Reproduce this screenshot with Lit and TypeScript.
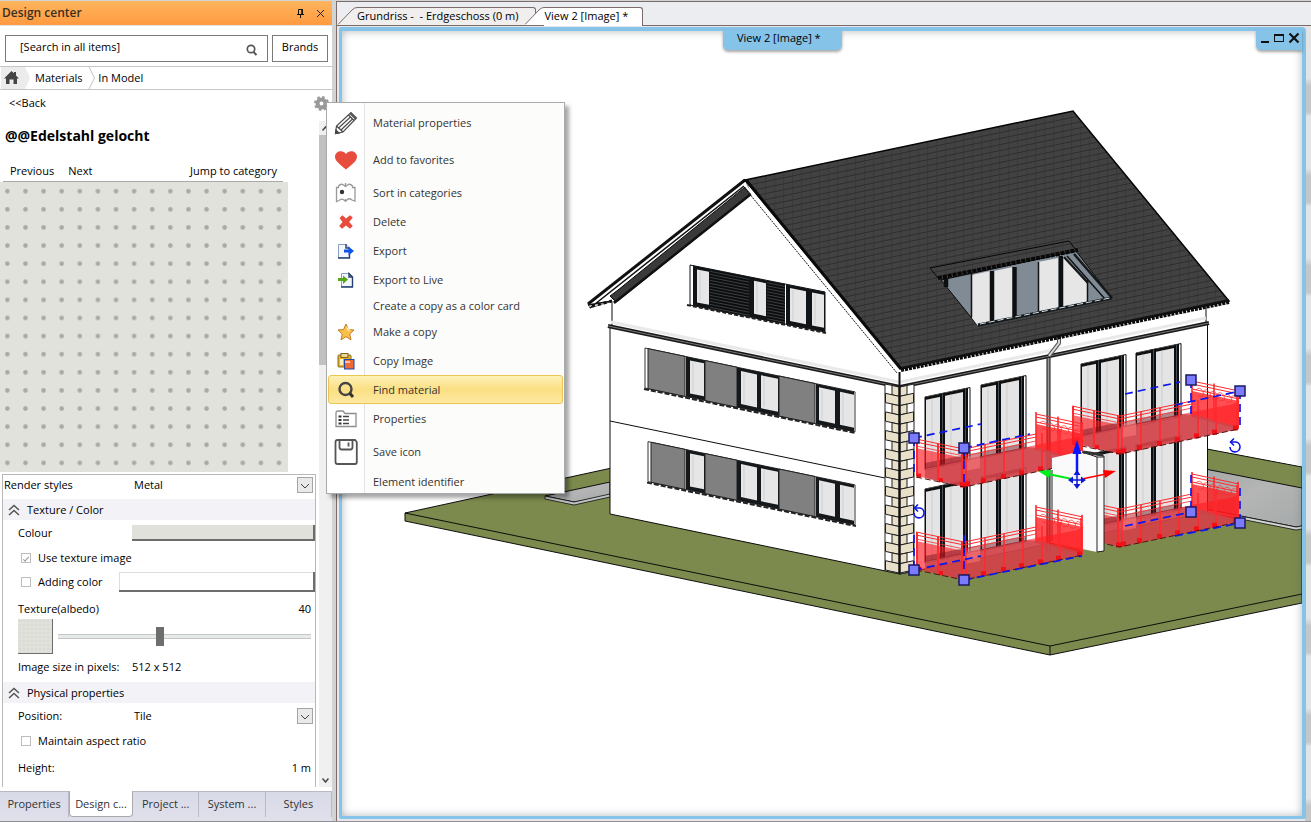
import { LitElement, html, svg, css } from "lit";
import { customElement } from "lit/decorators.js";

type Pt = [number, number];
const pts = (list: Pt[]) => list.map((p) => p.join(",")).join(" ");
const range = (n: number) => Array.from({ length: n }, (_, i) => i);

/* ---------- 3D model view ---------- */
@customElement("model-scene")
class ModelScene extends LitElement {
  static styles = css`
    :host { display: block; }
    .scene { display: block; width: 100%; height: 100%; }
  `;

  /* A slanted piece of facade between two x positions. */
  private band(x1: number, x2: number, top: (x: number) => number, bottom: (x: number) => number, fill: string, stroke = "none") {
    return svg`<polygon points=${pts([[x1, top(x1)], [x2, top(x2)], [x2, bottom(x2)], [x1, bottom(x1)]])} fill=${fill} stroke=${stroke}/>`;
  }

  private pane(x1: number, x2: number, top: (x: number) => number, bottom: (x: number) => number) {
    return svg`
      ${this.band(x1, x2, (x) => top(x) + 3, (x) => bottom(x) - 4, "#e6e6e6")}
      <line x1=${x1 + 3} y1=${top(x1) + 5} x2=${x1 + 3} y2=${bottom(x1) - 5} stroke="#cfcfcf"/>`;
  }

  private windowRow(x0: number, y0: number) {
    const top = (x: number) => y0 + (x - 645) * 0.209;
    const bot = (x: number) => top(x) + 40;
    return svg`
      ${this.band(x0, 855, top, bot, "#fff", "#333")}
      ${this.band(x0 + 3, 685, top, bot, "#808080", "#222")}
      ${this.band(686, 705, top, bot, "#15191c")}
      ${this.band(705, 737, top, bot, "#808080", "#222")}
      ${this.band(737, 779, top, bot, "#15191c")}
      ${this.band(779, 815, top, bot, "#808080", "#222")}
      ${this.band(816, 854, top, bot, "#15191c")}
      ${this.pane(690, 704, top, bot)}
      ${this.pane(741, 757, top, bot)}
      ${this.pane(761, 778, top, bot)}
      ${this.pane(819, 835, top, bot)}
      ${this.pane(840, 854, top, bot)}
      <line x1=${x0 - 1} y1=${bot(x0) + 1} x2="856" y2=${bot(856) + 1} stroke="#222" stroke-width="2" stroke-dasharray="5 2"/>`;
  }

  private door(x: number, y: number, h: number) {
    const top = (v: number) => y - (v - x) * 0.21;
    const bot = (v: number) => top(v) + h;
    return svg`
      ${this.band(x, x + 45, top, bot, "#fff", "#111")}
      ${this.band(x, x + 43, top, bot, "#e4e4e4")}
      ${this.band(x, x + 43, top, (v) => top(v) + 3, "#111")}
      ${this.band(x + 15, x + 20, top, bot, "#0c0f11")}
      ${this.band(x + 38, x + 43, top, bot, "#0c0f11")}
      <path d="M${x + 7} ${top(x + 7) + 3}v${h - 4}M${x + 26} ${top(x + 26) + 3}v${h - 4}" stroke="#cdcdcd" fill="none"/>
      <path d="M${x + 17.5} ${top(x + 17)}v${h}M${x + 40.5} ${top(x + 40)}v${h}" stroke="#4a4f52" fill="none"/>
      <line x1=${x + 0.5} y1=${y} x2=${x + 0.5} y2=${y + h} stroke="#111"/>`;
  }

  private balcony(dx: number, dy: number) {
    const front = (x: number) => 449 - (x - 964) * 0.205;
    const floor = (x: number) => 486 - (x - 964) * 0.205;
    const side = (x: number) => 439 + (x - 916) * 0.208;
    const back = (x: number) => 414 + (x - 1036) * 0.21;
    return svg`
      <g transform="translate(${dx} ${dy})">
        <polygon points="916,448 964,458 964,486 916,476" fill="#ff1c22" opacity=".65"/>
        <polygon points="964,460 1036,445 1083,436 1083,462 964,486" fill="#ff2a30" opacity=".6"/>
        <polygon points="1036,424 1083,434 1083,462 1036,450" fill="#ff1418" opacity=".75"/>
        <polygon points="925,468 962,460 1026,447 1040,448 1083,460 1083,462 964,487 925,478" fill="#cc464c" opacity=".82"/>
        <polygon points="925,463 1026,443 1026,448 925,469" fill="#70101a" opacity=".45"/>
        <polygon points="965,457 980,454 980,468 965,471" fill="#ff8080" opacity=".5"/>
        <g stroke="#ff2a2e" fill="none">
          <path d="M916 439L964 449L1036 434M916 442L964 452L1036 437" stroke-width="1"/>
          <path d="M916 446L964 456L1036 441" stroke-width="1" opacity=".8"/>
          <path d="M1036 414L1083 424M1036 417L1083 427M1036 422L1083 432" stroke-width="1"/>
          ${range(6).map((i) => svg`<path d="M${1040 + i * 7} ${back(1040 + i * 7) + 8}q4 -4 7 2t-5 4" opacity=".7"/>`)}
          ${[917, 938, 962].map((x) => svg`<line x1=${x} y1=${side(x)} x2=${x} y2=${side(x) + 37} stroke-width="2"/>`)}
          ${[966, 985, 1004, 1023, 1042, 1060, 1081].map((x) => svg`<line x1=${x} y1=${front(x)} x2=${x} y2=${floor(x)} stroke-width="1.6"/>`)}
          ${[1036, 1058, 1082].map((x) => svg`<line x1=${x} y1=${back(x) - 2} x2=${x} y2=${back(x) + 36} stroke-width="1.6"/>`)}
        </g>
        ${[919, 941].map((x) => svg`<rect x=${x - 2} y=${side(x) + 34} width="4" height="4" fill="#f01016"/>`)}
        ${[962, 967, 983, 1003, 1021, 1040, 1058, 1079].map((x) => svg`<rect x=${x - 2} y=${floor(x) - 4} width="5" height="5" fill="#f01016"/>`)}
        <path d="M916 477L964 487L1083 462" stroke="#511" fill="none" stroke-dasharray="6 3"/>
      </g>`;
  }

  private stones() {
    return range(20).map((i) => {
      const y = 384 + i * 9.3;
      const wide = i % 2 === 1;
      return svg`
        <g fill=${"#e9e0ca"} stroke="#1c1c1c">
          <polygon points=${pts([[wide ? 885.5 : 892, y + (wide ? 0 : 1.5)], [899, y + 3], [899, y + 12.3], [wide ? 885.5 : 892, y + (wide ? 9.3 : 10.8)]])}/>
          <polygon points=${pts([[900, y + 3], [wide ? 913.5 : 907, y + (wide ? 0 : 1.5)], [wide ? 913.5 : 907, y + (wide ? 9.3 : 10.8)], [900, y + 12.3]])}/>
        </g>`;
    });
  }

  private rotateMark(x: number, y: number) {
    return svg`<g transform="translate(${x} ${y})" fill="none" stroke="#0b16e8" stroke-width="1.600">
      <path d="M-5 1A5 5 0 1 0 1 -4H-4"/><path d="M-1 -7.500L-4.500 -4L-1 -0.500"/></g>`;
  }

  render() {
    const gt = (x: number) => 265 + (x - 690) * 0.2;
    const gb = (x: number) => gt(x) + 40;
    const handles: Pt[] = [[914, 438], [964, 448], [1191, 380], [1240, 391], [914, 570], [964, 580], [1191, 512], [1240, 523]];
    return html`
      <svg class="scene" viewBox="342 31 960 784" preserveAspectRatio="xMidYMin meet" role="img" aria-label="3D house view">
        <defs>
          <pattern id="tiles" width="9" height="6" patternUnits="userSpaceOnUse" patternTransform="skewY(-11.8)">
            <rect width="9" height="6" fill="#424242"/>
            <rect width="9" height="1" y="5" fill="#2e2e2e"/>
            <rect width="1" height="5" fill="#3b3b3b"/>
          </pattern>
          <pattern id="louvre" width="10" height="3" patternUnits="userSpaceOnUse" patternTransform="skewY(11.3)">
            <rect width="10" height="3" fill="#0b0d0e"/>
            <rect width="10" height="1" fill="#3c3f41"/>
          </pattern>
          <pattern id="grass" width="7" height="7" patternUnits="userSpaceOnUse">
            <rect width="7" height="7" fill="#7c8a4d"/>
            <path d="M1 2h1M5 1h1M3 5h1" stroke="#78874b"/>
            <path d="M4 3h1M0 6h1" stroke="#808d51"/>
          </pattern>
          <linearGradient id="stone" x1="0" y1="0" x2="1" y2="1">
            <stop offset="0" stop-color="#a2a6a6"/><stop offset=".5" stop-color="#b4b5b4"/><stop offset="1" stop-color="#a6aaaa"/>
          </linearGradient>
        </defs>

        <!-- ground -->
        <g stroke="#0d0d0d" stroke-linejoin="round">
          <polygon points="405,513 630,464 1207,449 1302,467 1302,603 1050,655 405,521" fill="url(#grass)"/>
          <path d="M405 513L1050 646L1302 594M1050 646V655" fill="none"/>
          <polygon points="1190,466 1302,488 1302,526 1296,527 1190,506" fill="url(#stone)"/>
          <polygon points="1190,506 1296,527 1302,526 1302,529 1296,530 1190,509" fill="#d2d4d4" stroke-width=".8"/>
          <polygon points="545,496 610,482 610,496 574,502" fill="url(#stone)"/>
          <polygon points="545,496 574,502 610,494 610,497 574,505 545,499" fill="#bfc3c4" stroke-width=".8"/>
        </g>
        <polygon points="600,460 900,400 1207,449 900,440" fill="#fff"/>
        <polygon points="1207.500,330 1302,330 1302,466 1207.500,448" fill="#fff"/>

        <!-- walls -->
        <polygon points="610,327 612,303 746,184 900,371 1207,305 1207,512 900,574 610,514" fill="#fff"/>
        <path d="M612 303V326M610 327V514L900 574L1207 512M610 421L885 478M1207.500 324V512M1206 300V323" fill="none" stroke="#0d0d0d"/>
        <path d="M611 322L899 382M900 382L1206 318" stroke="#e9e9e9" fill="none" stroke-width="3"/>
        <path d="M608 326L900 387L1209 323" fill="none" stroke="#1a1a1a" stroke-width="4"/>
        <path d="M608 326L900 387L1209 323" fill="none" stroke="#777" stroke-width="1"/>

        <!-- left eave -->
        <polygon points="745,179 588,304 590,308 606,303 618,301 751,194" fill="#fff" stroke="#111" stroke-width=".6"/>
        <polygon points="745,187 751,194 616,302 610,296 618,290" fill="#3a3a3a" stroke="#0a0a0a"/>
        <path d="M745 180L588 304" stroke="#111" stroke-width="3"/>
        <path d="M744 186L590 308M588 305L612 301" stroke="#111" fill="none" stroke-width="1.500"/>
        <path d="M592 306L612 301" stroke="#111" stroke-width="3" stroke-dasharray="3 3"/>
        <path d="M751 194L614 303" stroke="#111" stroke-width="2.500"/>
        <!-- gable windows -->
        ${this.band(690, 825, gt, gb, "#fff", "#111")}
        ${this.band(693, 711, gt, gb, "#111518")}
        ${this.band(710, 749, gt, gb, "url(#louvre)")}
        ${this.band(749, 767, gt, gb, "#111518")}
        ${this.band(767, 785, gt, gb, "url(#louvre)")}
        ${this.band(786, 825, gt, gb, "#111518")}
        ${this.pane(697, 709, gt, gb)}
        ${this.pane(754, 766, gt, gb)}
        ${this.pane(790, 806, gt, gb)}
        ${this.pane(812, 824, gt, gb)}
        <path d="M687 305L826 333" stroke="#222" stroke-width="2" stroke-dasharray="4 2"/>

        ${this.windowRow(645, 348)}
        ${this.windowRow(648, 441)}

        <!-- corner stones -->
        <polygon points="885,384 900,387 914,384 914,571 900,574 885,571" fill="#fff" stroke="#222"/>
        ${this.stones()}
        <path d="M899.500 372V574" stroke="#111" stroke-width="2"/>

        <!-- garden facade -->
        ${this.door(925, 397, 73)}
        ${this.door(981, 385, 73)}
        ${this.door(1081, 364, 73)}
        ${this.door(1136, 353, 73)}
        ${this.door(925, 489, 74)}
        ${this.door(981, 477, 74)}
        ${this.door(1081, 456, 74)}
        ${this.door(1136, 445, 74)}
        <path d="M1048.500 358V552" stroke="#111" stroke-width="4"/>
        <path d="M1048.500 358V552" stroke="#999" stroke-width="2"/>
        <path d="M1059 336V343L1049 356" stroke="#555" stroke-width="4" fill="none"/>
        <path d="M1059 336V343L1049 356" stroke="#d8d8d8" stroke-width="2" fill="none"/>

        <!-- roof -->
        <polygon points="745,180 1073,111 1229,301 901,369" fill="url(#tiles)" stroke="#050505" stroke-width="1.500"/>
        <path d="M744 184L898 371" stroke="#fff" stroke-width="2"/>
        <path d="M743 186L897 373" stroke="#111" stroke-width="1" stroke-dasharray="2 1"/>
        <path d="M746 180L901 369" stroke="#0a0a0a" stroke-width="3"/>
        <path d="M901 370L1229 302" stroke="#0a0a0a" stroke-width="4" stroke-dasharray="3 1"/>
        <path d="M901 368L1229 300" stroke="#111" stroke-width="2"/>

        <!-- roof terrace -->
        <path d="M938 278L930 268L1069 241L1076 250" fill="none" stroke="#080808"/>
        <polygon points="941,280 1076,251 1112,298 978,326" fill="#808b95" stroke="#0a0a0a"/>
        <polygon points="972,275 990,271 990,323 978,326 972,318" fill="#e6e6e6"/>
        <polygon points="994,271 1013,267 1013,318 994,322" fill="#e6e6e6"/>
        <polygon points="1038,262 1058,258 1058,308 1038,313" fill="#e6e6e6"/>
        <polygon points="1063,256 1066,257 1087,281 1087,302 1063,307" fill="#e6e6e6"/>
        <path d="M946 278V287M992 271V322M1014.500 267V318M1061 256V308" stroke="#0d1012" stroke-width="4.500" fill="none"/>
        <path d="M971.500 274V317M1038.500 262V312M1087.500 280V302M1067 256L1105 299" stroke="#111" fill="none" stroke-width="1.500"/>
        <path d="M1064 257L1088 283M1074 254L1112 298" stroke="#16191b" fill="none" stroke-width="2.500"/>
        <path d="M978 325L1112 298" stroke="#15191c" stroke-width="3"/>
        <path d="M980 324L1110 298" stroke="#cfe0e8" stroke-width="1" stroke-dasharray="6 3"/>
        <path d="M938 278L1078 250" stroke="#090909" stroke-width="4" stroke-dasharray="4 1"/>

        <!-- balconies -->
        ${this.balcony(156, -33)}
        ${this.balcony(156, 60)}
        ${this.balcony(0, 0)}
        <polygon points="1052,458 1082,451 1104,456 1104,551 1097,552 1052,543" fill="#fafafa"/>
        <path d="M1082 452L1104 456V551L1097 552V457L1082 452M1097 457H1104M1052 470V541" fill="none" stroke="#222"/>
        <path d="M1083 452L1103 455" stroke="#333" stroke-width="3"/>
        ${this.balcony(0, 93)}

        <!-- selection frame -->
        <g stroke="#0b16f0" stroke-width="1.700" stroke-dasharray="8 5" fill="none">
          <path d="M914 438L981 424M964 448L1030 434M914 438V475M914 535V570M964 448V487M964 535V580"/>
          <path d="M1125 394L1180 382M1175 405L1240 391M1191 380V415M1240 391V430"/>
          <path d="M914 570L981 556M964 580L1082 556M1125 526L1191 512M1175 536L1240 523M1191 475V512M1240 488V523"/>
        </g>
        ${handles.map(([x, y]) => svg`<rect x=${x - 5} y=${y - 5} width="10" height="10" fill="#7b7bff" stroke="#1a1a60" stroke-width="1.500"/>`)}
        ${this.rotateMark(919, 512)}
        ${this.rotateMark(1235, 446)}

        <!-- move gizmo -->
        <path d="M1077 480L1048 474" stroke="#00e81c" stroke-width="2"/>
        <path d="M1038 471L1051 470L1049 478Z" fill="#00f01c"/>
        <path d="M1077 480L1106 474" stroke="#f00" stroke-width="1.500"/>
        <path d="M1116 471L1103 470L1105 478Z" fill="#f00"/>
        <path d="M1077 480V452" stroke="#0b16ff" stroke-width="2.500"/>
        <path d="M1077 440L1081.500 454H1072.500Z" fill="#0b16ff"/>
        <path d="M1070 480H1084M1077 473V487" stroke="#fff" stroke-width="3"/>
        <path d="M1077 470V487M1070 480H1084" stroke="#0b16d8" stroke-width="1.500"/>
        <path d="M1077 489L1073.500 484H1080.500ZM1068 480L1073 476.500V483.500ZM1086 480L1081 476.500V483.500ZM1077 470L1073.500 475H1080.500Z" fill="#0b16d8"/>
      </svg>`;
  }
}

/* ---------- Icons ---------- */
const icons: Record<string, unknown> = {
  pencil: html`<svg width="24" height="26" viewBox="0 0 24 26" fill="none" stroke="#4a4a4a" stroke-width="1.200"><path d="M1.500 23.500L2.500 16L17 2.500L22.500 8L9 22ZM2.500 16L9 22M14.500 5L20 10.500M16 3.500L21.500 9M4.500 18L16.500 7M7 20L18.500 9"/><path d="M1.500 23.500L2 20L5 23Z" fill="#444"/></svg>`,
  heart: html`<svg width="24" height="20" viewBox="0 0 24 20"><path d="M12 19.500C4 13 1 10.500 1 6.500C1 1 9 -1 12 4C15 -1 23 1 23 6.500C23 10.500 20 13 12 19.500Z" fill="#e74c3c"/></svg>`,
  map: html`<svg width="22" height="22" viewBox="0 0 22 22" fill="none" stroke="#999" stroke-width="1.300"><path d="M1.500 5.500H3.500V4Q6 1 8.500 3L10.500 4.500L12.500 3Q15 1 17.500 4V5.500H20V19L17 18Q14 15.500 12 18L10.500 19L9 18Q6.500 16 4 18.500L1.500 19.500Z"/><path d="M10.500 1V5M10.500 17V20"/><circle cx="7" cy="10" r="2.200" fill="#333" stroke="none"/></svg>`,
  cross: html`<svg width="16" height="16" viewBox="0 0 16 16"><path d="M1.500 4L4.500 1.200L8 4.500L12 1.200L14.800 3.500L11.200 8L14.800 12L12 14.800L8 11.500L4 14.800L1.200 12L4.500 8Z" fill="#e74c3c"/></svg>`,
  exportDoc: html`<svg width="18" height="16" viewBox="0 0 18 16"><path d="M1.500 1.500H9L12.500 5V14.500H1.500Z" fill="#f4f7fc" stroke="#8ba0bf"/><path d="M1 15H12.500V11M9 1V5H12.500" stroke="#24406f" fill="none" stroke-width="1.400"/><path d="M7 6.500H11.500V3.500L17 8L11.500 12.500V9.500H7Z" fill="#0f52e8"/></svg>`,
  importDoc: html`<svg width="18" height="16" viewBox="0 0 18 16"><path d="M4.500 1.500H12L15.500 5V14.500H4.500Z" fill="#f4f7fc" stroke="#8ba0bf"/><path d="M4 15H15.500V5L12 1.500V5H15" stroke="#24406f" fill="none" stroke-width="1.400"/><path d="M1 6H6V3.500L11 7.500L6 12V9H1Z" fill="#57a81c"/></svg>`,
  star: html`<svg width="18" height="18" viewBox="0 0 18 18"><path d="M9 1L11.400 6.500L17 7L12.700 11L14 16.800L9 13.700L4 16.800L5.300 11L1 7L6.600 6.500Z" fill="#fbc04a" stroke="#bf7d22"/><path d="M9 3L10.500 7.500L14 8Z" fill="#fff1b0"/></svg>`,
  paste: html`<svg width="18" height="18" viewBox="0 0 18 18"><rect x="1" y="3" width="13" height="12" rx="1" fill="#e9b12d" stroke="#8a6a14"/><rect x="4" y="1.500" width="7" height="4" fill="#e8d890" stroke="#7c6522"/><path d="M3 7h3v6H3z" fill="#fff0b8"/><rect x="7.500" y="7.500" width="9.500" height="9.500" fill="#ee6b35" stroke="#1949b0"/><path d="M8 9h5v2H8z" fill="#ffc29b"/></svg>`,
  find: html`<svg width="18" height="18" viewBox="0 0 18 18" fill="none"><circle cx="8.500" cy="8" r="6" stroke="#444" stroke-width="2.400"/><path d="M12.500 12L16 16" stroke="#333" stroke-width="3"/></svg>`,
  props: html`<svg width="22" height="18" viewBox="0 0 22 18" fill="none"><path d="M1 16.500V3Q1 1 3 1H8L10 3.500H21V16.500Z" stroke="#8e8e8e" stroke-width="1.300"/><path d="M8 6.500H14M8 10H14M8 13.500H14" stroke="#444" stroke-width="1.400"/><path d="M3.500 5.500h3v2h-3zM3.500 9h3v2h-3zM3.500 12.500h3v2h-3z" fill="#333"/></svg>`,
  disk: html`<svg width="24" height="26" viewBox="0 0 24 26" fill="none" stroke="#555" stroke-width="1.800"><path d="M1.500 3Q1.500 1 3.500 1H21L22.800 3V23Q22.800 25 21 25H3.500Q1.500 25 1.500 23Z"/><path d="M5.500 1V8Q5.500 10.500 7.500 10.500H16.500Q18.500 10.500 18.500 8V1"/><path d="M14.500 3.500V7.500"/></svg>`,
};

const menuItems: { label: string; icon?: string; size?: string }[] = [
  { label: "Material properties", icon: "pencil", size: "tall" },
  { label: "Add to favorites", icon: "heart", size: "tall" },
  { label: "Sort in categories", icon: "map" },
  { label: "Delete", icon: "cross" },
  { label: "Export", icon: "exportDoc" },
  { label: "Export to Live", icon: "importDoc" },
  { label: "Create a copy as a color card", size: "short" },
  { label: "Make a copy", icon: "star" },
  { label: "Copy Image", icon: "paste" },
  { label: "Find material", icon: "find", size: "active" },
  { label: "Properties", icon: "props" },
  { label: "Save icon", icon: "disk", size: "tall" },
  { label: "Element identifier", size: "short" },
];

@customElement("context-menu")
class ContextMenu extends LitElement {
  static styles = css`
    :host { display: block; }
    .menu {
      list-style: none; margin: 0; padding: 1px 1px 0; width: 239px; box-sizing: border-box;
      border: 1px solid #a7abb0; box-shadow: 4px 4px 4px rgba(0, 0, 0, .35);
      background: linear-gradient(90deg, #fff 37px, #e2e3e4 37px, #e2e3e4 38px, #fcfcfa 38px);
    }
    .item {
      display: grid; grid-template-columns: 34px 1fr; align-items: center; column-gap: 10px;
      width: 100%; height: 29px; padding: 0; border: 1px solid transparent; background: none; box-sizing: border-box;
      font: 11px/16px "Open Sans", "Noto Sans", sans-serif; color: #333; text-align: left;
    }
    .tall { height: 37px; }
    .short { height: 23px; }
    .active { border-color: #eac54f; border-radius: 3px; background: linear-gradient(#fdf0b8, #fbdf82 50%, #fde9a2); }
    .icon { display: flex; justify-content: center; }
  `;
  render() {
    return html`<ul class="menu" role="menu">
      ${menuItems.map((m) => html`<li role="none"><button class="item ${m.size ?? ""}" role="menuitem">
        <span class="icon">${m.icon ? icons[m.icon] : ""}</span><span>${m.label}</span></button></li>`)}
    </ul>`;
  }
}

/* ---------- Design center panel ---------- */
const chevrons = html`<svg width="12" height="12" viewBox="0 0 12 12" fill="none" stroke="#555" stroke-width="1.500"><path d="M1 6L6 1.500L11 6M1 11L6 6.500L11 11"/></svg>`;

@customElement("design-center")
class DesignCenter extends LitElement {
  static styles = css`
    :host { display: flex; flex-direction: column; background: #fff; color: #000; font: 11px/16px "Open Sans", "Noto Sans", sans-serif; min-height: 0; }
    button, input, select { font: inherit; color: inherit; margin: 0; }
    button { background: none; border: 0; padding: 0; }
    a { color: inherit; text-decoration: none; }
    .head { display: flex; align-items: center; height: 24px; padding: 0 2px; background: linear-gradient(#ffb55e, #ff9a3f); border-bottom: 1px solid #e4e4e4; }
    .head h1 { flex: 1; margin: 0; font-size: 12px; font-weight: 600; color: #3a3020; }
    .head button { display: flex; width: 20px; justify-content: center; }
    .search { display: flex; gap: 4px; padding: 9px 4px 4px 5px; }
    .field { flex: 1; display: flex; align-items: center; border: 1px solid #7a7a7a; height: 25px; min-width: 0; }
    .field input { flex: 1; min-width: 0; border: 0; outline: 0; padding: 0 0 4px 14px; background: none; }
    .field button { display: flex; padding: 2px 9px 0 0; }
    .brands { border: 1px solid #7a7a7a; width: 56px; padding-bottom: 4px; }
    .crumbs { display: flex; align-items: center; height: 22px; border: solid #c6c6c6; border-width: 1px 0; }
    .home { display: flex; align-items: center; width: 31px; height: 22px; }
    .crumbs a { margin-right: 5px; }
    .crumbs .home { margin: 0 4px 0 0; }
    .back { display: flex; justify-content: space-between; align-items: center; height: 31px; padding: 0 3px 0 9px; }
    .back a { padding-bottom: 6px; }
    .scroll { flex: 1; display: flex; min-height: 0; overflow: hidden; }
    .content { flex: 1; min-width: 0; }
    .bar { width: 13px; background: #f0f0f0; display: flex; flex-direction: column; justify-content: space-between; }
    .bar .top { height: 244px; background: #c1c1c1; }
    .arrow { display: flex; align-items: center; justify-content: center; width: 13px; height: 14px; background: #f0f0f0; }
    h2 { margin: 0; padding: 6px 5px 0; font-size: 14px; line-height: 18px; font-weight: 700; }
    .nav { display: flex; gap: 14px; margin: 17px 36px 0 3px; padding: 1px 6px 2px 7px; border-bottom: 1px solid #aaa; }
    .nav .jump { margin-left: auto; }
    .preview { display: block; }
    .props { margin: 2px 3px 0 2px; border: solid #b8b8b8; border-width: 1px 1px 0; height: 400px; }
    .row { display: flex; align-items: center; height: 26px; padding-left: 15px; }
    .flush { padding-left: 1px; height: 20px; margin-bottom: 4px; }
    .label { width: 114px; flex: none; }
    .flush .label { width: 128px; }
    select { appearance: none; flex: 1; min-width: 0; height: 20px; padding: 0 0 0 2px; border: 0; outline: 0; background: none; }
    .drop { display: flex; flex: 1; min-width: 0; align-items: center; }
    .drop svg { margin-left: -16px; margin-right: 2px; pointer-events: none; flex: none; }
    .section { display: flex; align-items: center; gap: 7px; margin: 2px 0 0; padding-left: 5px; height: 21px; background: #f2f2f7; font-size: 11px; font-weight: 400; }
    .swatch { flex: 1; height: 16px; border: solid #6d6d6d; border-width: 0 2px 2px 0; background: #e0e1da; }
    .white { background: #fff; height: 20px; box-shadow: inset 1px 1px #ddd; margin-left: 9px; }
    .check { height: 24px; gap: 7px; padding-left: 18px; }
    .check input { appearance: none; width: 10px; height: 10px; border: 1px solid #bdbdbd; background: #fff; display: grid; place-items: center; }
    .check input:checked::after { content: ""; width: 5px; height: 2px; border: solid #999; border-width: 0 0 1px 1px; transform: rotate(-50deg); }
    .low { height: 24px; padding-top: 6px; box-sizing: border-box; }
    .grow { flex: 1; }
    .value { padding-right: 4px; }
    .slide { height: 36px; gap: 5px; padding-right: 4px; }
    .thumb { width: 35px; height: 35px; box-sizing: border-box; border: solid #6d6d6d; border-width: 0 1px 1px 0; background: radial-gradient(#d9dad4 1px, #e0e1da 1px) 0 0 / 4px 4px; }
    input[type="range"] { appearance: none; flex: 1; min-width: 0; height: 20px; background: none; }
    input[type="range"]::-webkit-slider-runnable-track { height: 5px; box-sizing: border-box; background: #e7eaea; border: solid #c6c6c6; border-width: 1px 0; }
    input[type="range"]::-webkit-slider-thumb { appearance: none; width: 8px; height: 19px; margin-top: -8px; background: #6d6d6d; }
    .tabs { display: flex; height: 34px; padding-top: 4px; background: linear-gradient(#fff 4px, #b9b9c6 4px, #b9b9c6 5px, #d9dae8 5px, #dfe0ea); box-sizing: border-box; }
    .tab { height: 26px; flex: 1; min-width: 0; color: #333; border-right: 1px solid #b9bac6; white-space: nowrap; overflow: hidden; }
    .first { flex: 0 0 69px; }
    .on { background: #fff; border: 1px solid #aaa; border-top: 0; border-radius: 0 0 4px 4px; flex: 0 0 64px; box-sizing: border-box; }
  `;

  private dropMark = html`<svg width="16" height="16" viewBox="0 0 16 16" fill="none"><rect x=".5" y=".5" width="15" height="15" fill="#e9e9e9" stroke="#a5a5a5"/><path d="M4 7L8 11L12 7" stroke="#444"/></svg>`;

  render() {
    return html`
      <header class="head">
        <h1>Design center</h1>
        <button aria-label="Pin"><svg width="9" height="10" viewBox="0 0 9 10" fill="none" stroke="#111"><path d="M2.500 6V1.500H6.500V6M1 6.500H8M4.500 6.500V10"/><path d="M6 1V6" stroke-width="1.500"/></svg></button>
        <button aria-label="Close"><svg width="9" height="9" viewBox="0 0 9 9" stroke="#222"><path d="M1 1L8 8M8 1L1 8"/></svg></button>
      </header>
      <div class="search">
        <div class="field">
          <input type="text" aria-label="Search" .value=${"[Search in all items]"} />
          <button aria-label="Start search"><svg width="12" height="12" viewBox="0 0 12 12" fill="none" stroke="#555"><circle cx="5" cy="5" r="3.700" stroke-width="1.700"/><path d="M7.500 8L10.500 11" stroke-width="2"/></svg></button>
        </div>
        <button class="brands">Brands</button>
      </div>
      <nav class="crumbs" aria-label="Breadcrumb">
        <a class="home" href="#" aria-label="Home"><svg width="31" height="22" viewBox="0 0 31 22"><path d="M1 0H25L30 11L25 22H1Z" fill="#ececec"/><path d="M4 11.500L11.500 4L14 6.300V5H16V8.500L19 11.500H17V17H13.500V12.500H9.500V17H6V11.500Z" fill="#444"/></svg></a>
        <a href="#">Materials</a>
        <svg width="8" height="22" viewBox="0 0 8 22" fill="none" stroke="#c2c2c2"><path d="M1 0L6.500 11L1 22"/></svg>
        <a href="#">&nbsp;In Model</a>
      </nav>
      <div class="back">
        <a href="#">&lt;&lt;Back</a>
        <button aria-label="Options"><svg width="15" height="15" viewBox="0 0 15 15"><circle cx="7.500" cy="7.500" r="4" fill="none" stroke="#999" stroke-width="4"/><circle cx="7.500" cy="7.500" r="6.500" fill="none" stroke="#999" stroke-width="2" stroke-dasharray="2.500 2.600"/></svg></button>
      </div>
      <div class="scroll">
        <div class="content">
          <h2>@@Edelstahl gelocht</h2>
          <nav class="nav"><a href="#">Previous</a><a href="#">Next</a><a class="jump" href="#">Jump to category</a></nav>
          <svg class="preview" width="288" height="290" viewBox="0 0 288 290" role="img" aria-label="Material preview">
            <defs><pattern id="holes" x="-1.700" y=".2" width="18.110" height="18.110" patternUnits="userSpaceOnUse"><circle cx="9.050" cy="9.050" r="2.300" fill="#a9aaa5"/></pattern></defs>
            <rect width="288" height="290" fill="#e1e2dc"/><rect width="288" height="290" fill="url(#holes)"/>
          </svg>
          <div class="props">
            <div class="row flush"><label class="label" for="style">Render styles</label><span class="drop"><select id="style"><option>Metal</option></select>${this.dropMark}</span></div>
            <h3 class="section">${chevrons}Texture / Color</h3>
            <div class="row"><label class="label" for="colour">Colour</label><button class="swatch" id="colour"></button></div>
            <div class="row check"><input type="checkbox" id="tex" checked /><label for="tex">Use texture image</label></div>
            <div class="row check"><input type="checkbox" id="add" /><label for="add">Adding color</label><button class="swatch white" aria-label="Added color"></button></div>
            <div class="row low"><label class="grow" for="albedo">Texture(albedo)</label><span class="value">40</span></div>
            <div class="row slide"><span class="thumb"></span><input id="albedo" type="range" min="0" max="100" value="40" /></div>
            <div class="row"><span class="label">Image size in pixels:</span><span>512 x 512</span></div>
            <h3 class="section">${chevrons}Physical properties</h3>
            <div class="row"><label class="label" for="pos">Position:</label><span class="drop"><select id="pos"><option>Tile</option></select>${this.dropMark}</span></div>
            <div class="row check"><input type="checkbox" id="ratio" /><label for="ratio">Maintain aspect ratio</label></div>
            <div class="row low"><span class="grow">Height:</span><span class="value">1 m</span></div>
          </div>
        </div>
        <div class="bar">
          <div class="top"><span class="arrow"><svg width="7" height="5" viewBox="0 0 7 5"><path d="M.5 4.500L3.500 1L6.500 4.500" stroke="#444" fill="none" stroke-width="1.500"/></svg></span></div>
          <span class="arrow"><svg width="7" height="5" viewBox="0 0 7 5"><path d="M.5 .5L3.500 4L6.500 .5" stroke="#444" fill="none" stroke-width="1.500"/></svg></span>
        </div>
      </div>
      <div class="tabs" role="tablist">
        <button class="tab first" role="tab">Properties</button>
        <button class="tab on" role="tab" aria-selected="true">Design c...</button>
        <button class="tab" role="tab">Project ...</button>
        <button class="tab" role="tab">System ...</button>
        <button class="tab" role="tab">Styles</button>
      </div>`;
  }
}

/* ---------- Application frame ---------- */
@customElement("app-root")
class AppRoot extends LitElement {
  static styles = css`
    :host { display: block; }
    .app {
      position: relative; display: grid; grid-template-columns: 332px 1fr; column-gap: 4px; height: 100vh; box-sizing: border-box;
      padding: 1px 0 0; background: #d2d4d4; overflow: hidden; font: 11px/16px "Open Sans", "Noto Sans", sans-serif; border-bottom: 1px solid #8f8f95;
    }
    .main { display: flex; flex-direction: column; min-width: 0; min-height: 0; border: solid #7b6b6b; border-width: 1px 0 0 1px; background: #ebedf1; }
    .strip { display: flex; align-items: flex-end; height: 24px; padding-left: 1px; border-bottom: 1px solid #7b6b6b; box-sizing: border-box; }
    .tab { display: flex; height: 18px; padding: 0; border: 0; background: none; font: inherit; color: #000; }
    .tab .body { height: 18px; box-sizing: border-box; border: solid #7b6b6b; border-width: 1px 1px 0 0; border-radius: 0 3px 0 0; background: #f1eeee; padding-right: 16px; white-space: pre; }
    .tab svg { display: block; fill: #f1eeee; stroke: #7b6b6b; }
    .second { margin-left: -11px; margin-bottom: -1px; height: 19px; }
    .second .body { background: #fff; height: 19px; padding: 0 14px 0 1px; }
    .second svg { fill: #fff; }
    .desk { flex: 1; display: flex; min-height: 0; padding: 1px 5px 2px 2px; background: linear-gradient(90deg, #e5e7ea calc(100% - 6px), transparent 0), repeating-linear-gradient(#e4e4e4 0 52px, #c6c6c6 60px 86px, #e0e0e0 90px); }
    .view { position: relative; flex: 1; min-width: 0; border: solid #86c3e9; border-width: 4px 4px 3px 3px; border-radius: 2px 4px 2px 2px; background: #fff; }
    .view model-scene { height: 100%; }
    .shade { position: absolute; inset: 0; box-shadow: inset 0 0 8px rgba(80, 90, 100, .45); pointer-events: none; }
    .caption, .controls { position: absolute; top: -1px; background: #86c3e9; border-radius: 0 0 5px 5px; box-shadow: 0 2px 3px rgba(0, 0, 0, .35); box-sizing: border-box; height: 20px; }
    .caption { left: 50%; width: 119px; padding-left: 14px; margin: 0 0 0 -99px; font-size: 11px; font-weight: 400; line-height: 16px; }
    .controls { right: 0; width: 46px; display: flex; justify-content: center; gap: 3px; padding: 2px 0 0; border-radius: 0 0 0 5px; }
    .controls button { border: 0; padding: 0; background: none; display: flex; height: 12px; }
    .popup { position: absolute; left: 326px; top: 102px; }
  `;
  private slant = html`<svg width="19" height="18" viewBox="0 0 19 18"><path d="M0 17.500L14 3Q16.500 .5 19 .5V18H0" stroke="none"/><path d="M0 17.500L14 3Q16.500 .5 19 .5" fill="none"/></svg>`;
  render() {
    return html`
      <div class="app">
        <design-center></design-center>
        <main class="main">
          <div class="strip" role="tablist">
            <button class="tab" role="tab">${this.slant}<span class="body">Grundriss -  - Erdgeschoss (0 m)</span></button>
            <button class="tab second" role="tab" aria-selected="true">${this.slant}<span class="body">View 2 [Image] *</span></button>
          </div>
          <div class="desk">
            <section class="view">
              <model-scene></model-scene>
              <div class="shade"></div>
              <h2 class="caption">View 2 [Image] *</h2>
              <div class="controls">
                <button aria-label="Minimize"><svg width="11" height="12" viewBox="0 0 11 12"><path d="M2 10H10" stroke="#111" stroke-width="2"/></svg></button>
                <button aria-label="Maximize"><svg width="12" height="12" viewBox="0 0 12 12" fill="none" stroke="#111"><rect x="1.500" y="3.500" width="9" height="6"/><path d="M1 3H11" stroke-width="2"/></svg></button>
                <button aria-label="Close"><svg width="12" height="12" viewBox="0 0 12 12"><path d="M1.500 1.500L10.500 10.500M10.500 1.500L1.500 10.500" stroke="#111" stroke-width="2.200"/></svg></button>
              </div>
            </section>
          </div>
        </main>
        <context-menu class="popup"></context-menu>
      </div>`;
  }
}
